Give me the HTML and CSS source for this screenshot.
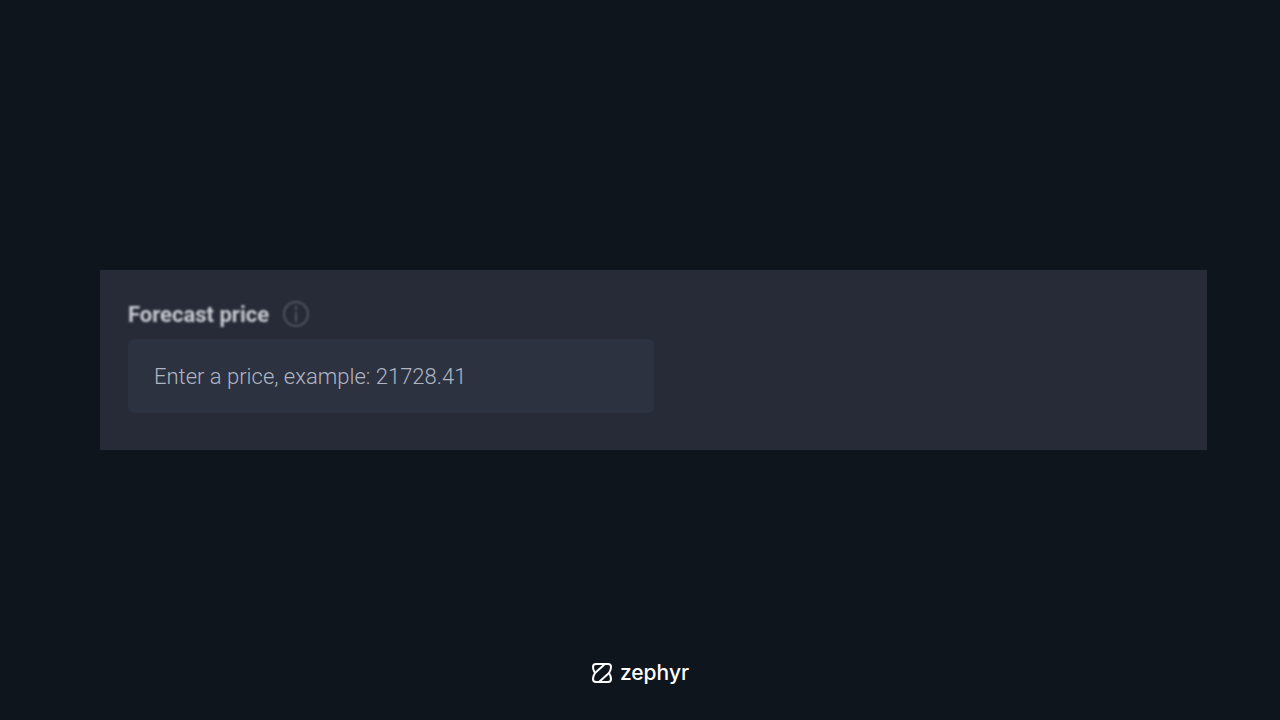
FILE: index.html
```
<!DOCTYPE html>
<html lang="en">
<head>
  <meta charset="utf-8">
  <title>Forecast price</title>
  <link rel="stylesheet" href="styles.css">
</head>
<body>
  <main class="panel">
    <form class="field">
      <div class="field-header">
        <label for="price">Forecast price</label>
        <svg class="info" viewBox="0 0 28 28" aria-hidden="true">
          <circle cx="14" cy="14" r="12"/>
          <path d="M14 6v4M14 12v10"/>
        </svg>
      </div>
      <input id="price" class="price" type="text" placeholder="Enter a price, example: 21728.41">
    </form>
  </main>
  <footer class="brand">
    <svg class="logo" viewBox="0 0 22 22" aria-hidden="true">
      <path d="M5 2H17Q20 2 20 5Q20 8 18 11Q20 14 20 17Q20 20 17 20H5Q2 20 2 17Q2 14 4 11Q2 8 2 5Q2 2 5 2Z"/>
      <path d="M4 11L14 2M8 20L18 11"/>
    </svg>
    <span>zephyr</span>
  </footer>
</body>
</html>
```
FILE: styles.css
```
* {
  box-sizing: border-box;
}

body {
  display: grid;
  grid-template-rows: 1fr auto 1fr; /* Keep the panel in the middle, brand at the bottom */
  min-height: 100vh;
  margin: 0;
  background: #0f151d;
  font-family: Roboto, "Liberation Sans", sans-serif;
}

.panel {
  grid-row: 2;
  margin: 0 73px 0 100px;
  padding: 28px 28px 37px;
  background: #272b37;
}

.field {
  width: 50%;
}

.field-header {
  display: flex;
  align-items: center;
  gap: 13px;
  height: 32px;
  margin-bottom: 9px;
  color: #c8cbd2;
  font-size: 22px;
  font-weight: 700;
  filter: blur(1px); /* Label is out of focus next to the input */
}

.info {
  width: 28px;
  height: 28px;
  fill: none;
  stroke: #50545f;
  stroke-width: 2;
}

.price {
  display: block;
  width: 100%;
  height: 74px;
  padding: 0 26px;
  border: 0;
  border-radius: 6px;
  background: #2c323f;
  color: #fff;
  font-family: inherit;
  font-size: 22px;
  font-weight: 300;
  outline: none;
}

.price::placeholder {
  color: #b0b5c3;
  opacity: 1;
}

.brand {
  grid-row: 3;
  display: flex;
  align-self: end;
  align-items: center;
  justify-content: center;
  gap: 7px;
  margin-bottom: 33px;
  color: #fff;
  font-family: Inter, sans-serif;
  font-size: 21px;
  font-weight: 500;
  line-height: 28px;
}

.logo {
  width: 22px;
  height: 22px;
  fill: none;
  stroke: #fff;
  stroke-width: 2;
  stroke-linejoin: round;
}
```
